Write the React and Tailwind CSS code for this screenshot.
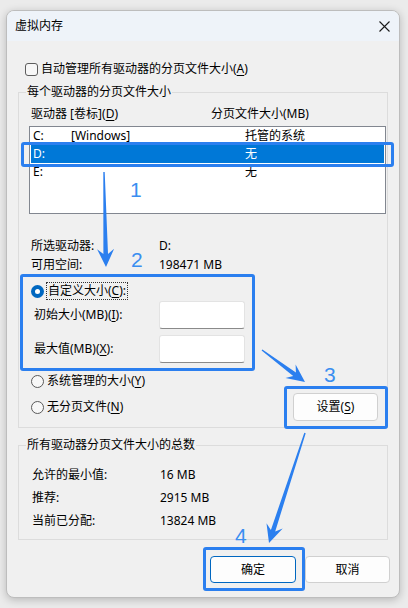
import React from 'react';

const font = "font-['Noto_Sans','Noto_Sans_CJK_SC',sans-serif]";

// build a tapered arrow (thin tail, barbed head) from start to tip
function arrowPath(sx, sy, tx, ty) {
  const dx = tx - sx;
  const dy = ty - sy;
  const len = Math.hypot(dx, dy);
  const ux = dx / len;
  const uy = dy / len;
  const nx = -uy;
  const ny = ux;
  const L = 18;
  const W = 8.5;
  const notch = 5;
  const s0 = 0.7;
  const s1 = 2.3;
  const bx = tx - ux * L;
  const by = ty - uy * L;
  const mx = tx - ux * (L - notch);
  const my = ty - uy * (L - notch);
  const p = [
    [sx + nx * s0, sy + ny * s0],
    [mx + nx * s1, my + ny * s1],
    [bx + nx * W, by + ny * W],
    [tx, ty],
    [bx - nx * W, by - ny * W],
    [mx - nx * s1, my - ny * s1],
    [sx - nx * s0, sy - ny * s0],
  ];
  return 'M' + p.map(([x, y]) => `${x.toFixed(1)} ${y.toFixed(1)}`).join(' L') + ' Z';
}

const Key = ({ children }) => <u className="underline underline-offset-2">{children}</u>;

const Radio = ({ checked }) =>
  checked ? (
    <span className="flex h-[13px] w-[13px] items-center justify-center rounded-full bg-[#0067c0]">
      <span className="h-[5px] w-[5px] rounded-full bg-white" />
    </span>
  ) : (
    <span className="h-[13px] w-[13px] rounded-full border border-[#5a5a5a] bg-[#f7f7f7]" />
  );

const drives = [
  { id: 'C:', label: '[Windows]', size: '托管的系统' },
  { id: 'D:', label: '', size: '无', selected: true },
  { id: 'E:', label: '', size: '无' },
];

const Mark = ({ className }) => (
  <div className={`absolute rounded-[3px] border-[3px] border-[#2b7fef] ${className}`} />
);

const Num = ({ children, className }) => (
  <span className={`absolute font-['Liberation_Sans',Arial,sans-serif] text-[21px] leading-[21px] text-[#3a8ef0] ${className}`}>
    {children}
  </span>
);

export default function App() {
  return (
    <div className={`relative h-[608px] w-[408px] overflow-hidden bg-[#ebebeb] pt-[10px] pl-[6px] ${font} text-[12px] text-black`}>
      <div className="flex h-[588px] w-[394px] flex-col overflow-hidden rounded-[8px] border border-[#bdbdbd] bg-[#f0f0f0] shadow-[0_2px_8px_rgba(0,0,0,0.22)]">
        {/* title bar */}
        <div className="flex h-[30px] shrink-0 items-center justify-between bg-[#eef3f9] pl-[8px] pr-[9px]">
          <span className="leading-[16px]">虚拟内存</span>
          <svg width="11" height="11" viewBox="0 0 11 11">
            <path d="M0.5 0.5 L10.5 10.5 M10.5 0.5 L0.5 10.5" stroke="#1a1a1a" strokeWidth="1.1" />
          </svg>
        </div>

        <div className="flex flex-col px-[11px]">
          <label className="mt-[19px] flex h-[18px] items-center gap-[3px] pl-[7px]">
            <span className="h-[13px] w-[13px] rounded-[3px] border border-[#5d5d5d] bg-[#f7f7f7]" />
            <span>自动管理所有驱动器的分页文件大小(<Key>A</Key>)</span>
          </label>

          {/* per-drive settings */}
          <fieldset className="mt-[6px] border border-[#dcdcdc] pl-[10px] pt-[6px] pb-[6px]">
            <legend className="-ml-[3px] px-[1px] leading-[16px]">每个驱动器的分页文件大小</legend>
            <div className="flex h-[16px] items-center pl-[2px] leading-[16px]">
              <span className="w-[180px]">驱动器 [卷标](<Key>D</Key>)</span>
              <span>分页文件大小(MB)</span>
            </div>
            <div className="mt-[4px] h-[88px] w-[357px] border border-[#828790] bg-white px-[1px]">
              {drives.map((d) => (
                <div
                  key={d.id}
                  className={`flex h-[18px] items-center pl-[2px] leading-[16px] ${d.selected ? 'bg-[#0078d7] text-white' : ''}`}
                >
                  <span className="w-[38px]">{d.id}</span>
                  <span className="w-[174px]">{d.label}</span>
                  <span>{d.size}</span>
                </div>
              ))}
            </div>

            <div className="mt-[22px] flex h-[19px] items-center pl-[2px]">
              <span className="w-[128px]">所选驱动器:</span>
              <span>D:</span>
            </div>
            <div className="flex h-[19px] items-center pl-[2px]">
              <span className="w-[128px]">可用空间:</span>
              <span>198471 MB</span>
            </div>

            <div className="mt-[8px] flex h-[18px] items-center gap-[2px] pl-[2px]">
              <Radio checked />
              <span className="border border-dotted border-[#333] px-[1px] leading-[16px]">
                自定义大小(<Key>C</Key>):
              </span>
            </div>
            <div className="mt-[1px] flex h-[28px] items-center pl-[5px]">
              <span className="w-[125px]">初始大小(MB)(<Key>I</Key>):</span>
              <span className="h-[28px] w-[86px] rounded-[3px] border border-[#e3e3e3] border-b-[#8a8a8a] bg-white" />
            </div>
            <div className="mt-[6px] flex h-[28px] items-center pl-[5px]">
              <span className="w-[125px]">最大值(MB)(<Key>X</Key>):</span>
              <span className="h-[28px] w-[86px] rounded-[3px] border border-[#e3e3e3] border-b-[#8a8a8a] bg-white" />
            </div>

            <div className="mt-[9px] flex h-[18px] items-center gap-[2px] pl-[2px]">
              <Radio />
              <span className="px-[1px]">系统管理的大小(<Key>Y</Key>)</span>
            </div>
            <div className="mt-[3px] flex h-[28px] items-center pl-[2px]">
              <Radio />
              <span className="ml-[2px] px-[1px]">无分页文件(<Key>N</Key>)</span>
              <button className="ml-auto mr-[9px] h-[28px] w-[85px] rounded-[4px] border border-[#d0d0d0] bg-[#fdfdfd]">
                设置(<Key>S</Key>)
              </button>
            </div>
          </fieldset>

          {/* totals */}
          <fieldset className="mt-[9px] border border-[#dcdcdc] pl-[10px] pt-[10px] pb-[7px]">
            <legend className="-ml-[3px] px-[1px] leading-[16px]">所有驱动器分页文件大小的总数</legend>
            {[
              ['允许的最小值:', '16 MB'],
              ['推荐:', '2915 MB'],
              ['当前已分配:', '13824 MB'],
            ].map(([k, v]) => (
              <div key={k} className="flex h-[23px] items-center pl-[3px]">
                <span className="w-[128px]">{k}</span>
                <span>{v}</span>
              </div>
            ))}
          </fieldset>

          <div className="-mr-[2px] mt-[16px] flex justify-end gap-[9px]">
            <button className="h-[27px] w-[86px] rounded-[4px] border border-[#0067c0] bg-[#fdfdfd]">确定</button>
            <button className="h-[27px] w-[85px] rounded-[4px] border border-[#d0d0d0] bg-[#fdfdfd]">取消</button>
          </div>
        </div>
      </div>

      {/* step markers */}
      <Mark className="left-[21px] top-[142px] h-[25px] w-[373px]" />
      <Mark className="left-[20px] top-[274px] h-[97px] w-[235px]" />
      <Mark className="left-[284px] top-[386px] h-[43px] w-[104px]" />
      <Mark className="left-[203px] top-[547px] h-[44px] w-[102px]" />

      <svg className="pointer-events-none absolute left-0 top-0" width="408" height="608">
        <path d={arrowPath(104, 172, 106, 267)} fill="#2b7fef" />
        <path d={arrowPath(262, 350, 305, 382)} fill="#2b7fef" />
        <path d={arrowPath(305, 433, 269, 543)} fill="#2b7fef" />
      </svg>

      <Num className="left-[130px] top-[179px]">1</Num>
      <Num className="left-[131px] top-[249px]">2</Num>
      <Num className="left-[324px] top-[364px]">3</Num>
      <Num className="left-[235px] top-[525px]">4</Num>
    </div>
  );
}
